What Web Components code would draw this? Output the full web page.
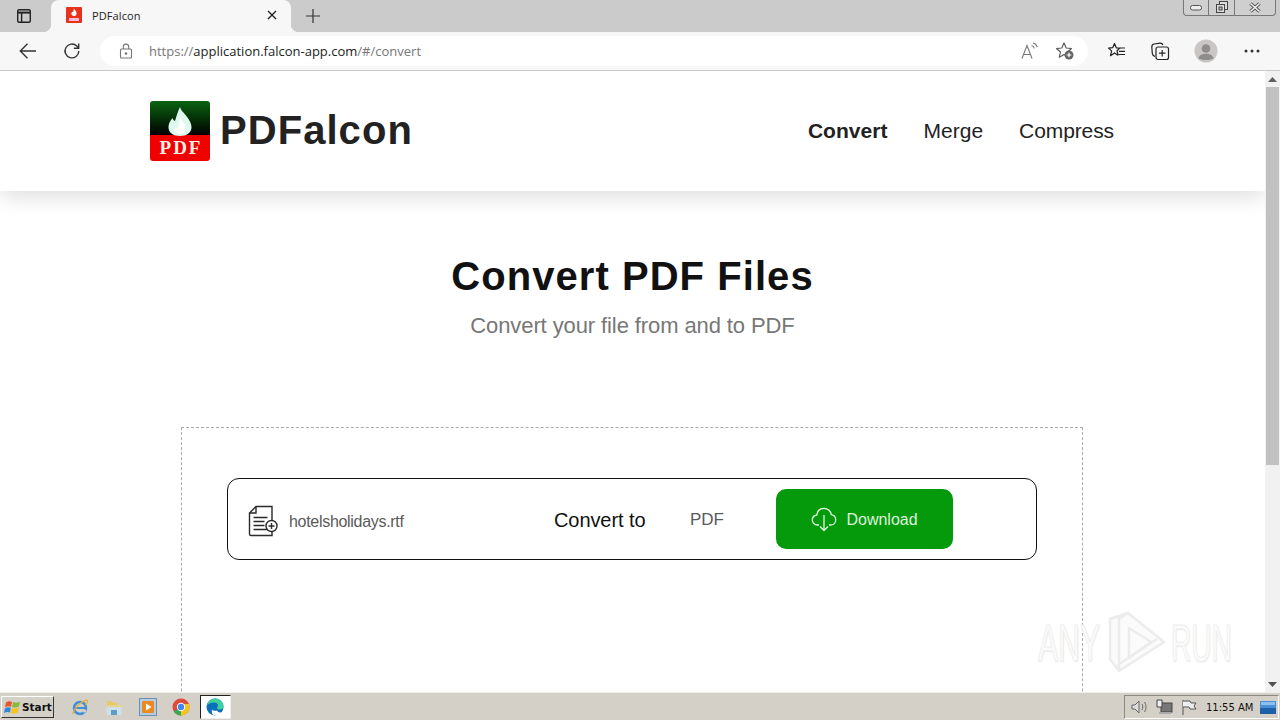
<!DOCTYPE html>
<html>
<head>
<meta charset="utf-8">
<title>PDFalcon</title>
<style>
html, body { margin: 0; height: 720px; overflow: hidden; background: #fff; }
body { display: flex; flex-direction: column; font-family: "Liberation Sans", Arial, sans-serif; }
</style>
</head>
<body>
<browser-bar></browser-bar>
<page-frame>
  <site-header></site-header>
  <hero-title></hero-title>
  <convert-box></convert-box>
</page-frame>
<win-taskbar></win-taskbar>

<script>
class BrowserBar extends HTMLElement {
    constructor() {
        super();
        this.attachShadow({ mode: 'open' });
        this.shadowRoot.innerHTML = `
        <style>
        :host { display: block; flex: none; height: 71px; font-family: "Open Sans", "Liberation Sans", sans-serif; }
        svg { display: block; }
        .strip { height: 32px; background: #cbcbcb; display: flex; position: relative; }
        .tabicon { width: 51px; display: flex; align-items: center; justify-content: center; padding-right: 3px; box-sizing: border-box; }
        .tab { width: 240px; height: 32px; background: #f7f7f7; border-radius: 8px 8px 0 0; display: flex; align-items: center; box-sizing: border-box; padding: 0 13px 2px 15px; font-size: 11px; color: #222; position: relative; }
        .tab::before, .tab::after { content: ''; position: absolute; bottom: 0; width: 8px; height: 8px; }
        .tab::before { left: -8px; background: radial-gradient(circle at 0 0, transparent 8px, #f7f7f7 8.5px); }
        .tab::after { right: -8px; background: radial-gradient(circle at 100% 0, transparent 8px, #f7f7f7 8.5px); }
        .tab span { flex: 1; margin-left: 10px; letter-spacing: .1px; }
        .plus { margin-left: 14px; display: flex; align-items: center; }
        .win { position: absolute; right: 4px; top: 0; width: 93px; height: 16px; border: 1px solid #777; border-top: 0; border-radius: 0 0 4px 4px; display: flex; box-sizing: border-box; background: #cfcfcf; }
        .win div { display: flex; align-items: center; justify-content: center; border-right: 1px solid #777; }
        .win div:last-child { border-right: 0; }
        .tools { height: 38px; background: #f7f7f7; display: flex; align-items: center; border-bottom: 1px solid #c9c9c9; }
        .nav { width: 100px; display: flex; flex: none; gap: 22px; padding-left: 17px; box-sizing: border-box; }
        .addr { width: 988px; height: 30px; background: #fff; border-radius: 15px; display: flex; align-items: center; box-sizing: border-box; padding: 0 13px 0 19px; font-size: 13px; color: #777; }
        .addr b { font-weight: 400; color: #222; }
        .url { flex: 1; margin-left: 16px; white-space: nowrap; }
        .right { display: flex; align-items: center; }
        .icons { display: flex; align-items: center; }
        </style>
        <div class="strip">
          <div class="tabicon">
            <svg width="16" height="16" viewBox="0 0 16 16" fill="none" stroke="#222" stroke-width="1.4"><rect x="1.7" y="1.7" width="12.6" height="12.6" rx="1.5"/><path d="M1.7 4.6h12.6" stroke-width="2"/><path d="M5.6 4.6v9.7"/></svg>
          </div>
          <div class="tab">
            <svg width="16" height="16" viewBox="0 0 16 16"><rect width="16" height="16" rx="1" fill="#e8321c"/><path d="M8 1.6c.4 1.5 2.6 2.6 2.6 4.8 0 1.5-1.1 2.6-2.6 2.6S5.4 7.9 5.4 6.5c0-1 .6-1.5.9-2.1.3.5.6.7.9.7C7.5 4.2 7.7 2.8 8 1.6z" fill="#fff"/><rect x="3" y="11" width="10" height="3" fill="#fbd"/></svg>
            <span>PDFalcon</span>
            <svg width="12" height="12" viewBox="0 0 12 12" stroke="#222" stroke-width="1.4"><path d="M2 2l8 8M10 2l-8 8"/></svg>
          </div>
          <div class="plus">
            <svg width="16" height="16" viewBox="0 0 16 16" stroke="#333" stroke-width="1.2"><path d="M8 1v14M1 8h14"/></svg>
          </div>
          <div class="win">
            <div style="width:24px"><svg width="12" height="6" viewBox="0 0 12 6"><rect x=".5" y=".5" width="11" height="4.5" rx="2" fill="#eee" stroke="#555"/></svg></div>
            <div style="width:25px"><svg width="14" height="13" viewBox="0 0 14 13" fill="#ddd" stroke="#444"><rect x="4.5" y=".5" width="8" height="8"/><rect x="1.5" y="3.5" width="8" height="8"/><rect x="4" y="6" width="3" height="3" fill="#bbb"/></svg></div>
            <div style="flex:1"><svg width="14" height="11" viewBox="0 0 14 11" stroke="#555" stroke-width="3.4"><path d="M2.5 1.5l9 8M11.5 1.5l-9 8"/><path d="M2.5 1.5l9 8M11.5 1.5l-9 8" stroke="#eee" stroke-width="1.6"/></svg></div>
          </div>
        </div>
        <div class="tools">
          <div class="nav">
            <svg width="22" height="22" viewBox="0 0 22 22" fill="none" stroke="#333" stroke-width="1.4"><path d="M19 11H3.5M10.5 3.8L3.3 11l7.2 7.2"/></svg>
            <svg width="22" height="22" viewBox="0 0 22 22" fill="none" stroke="#333" stroke-width="1.4"><path d="M17.8 11a6.9 6.9 0 1 1-2-4.9l1.7 1.8"/><path d="M17.7 3.4v4.800h-4.800"/></svg>
          </div>
          <div class="addr">
            <svg width="14" height="16" viewBox="0 0 14 16" fill="none" stroke="#777" stroke-width="1.1"><rect x="1.5" y="6" width="11" height="9" rx="1"/><path d="M4.3 6V3.8a2.7 2.7 0 0 1 5.4 0V6"/><circle cx="7" cy="10.5" r=".8" fill="#777"/></svg>
            <div class="url">https://<b>application.falcon-app.com</b>/#/convert</div>
            <div class="icons">
              <svg width="18" height="18" viewBox="0 0 18 18" fill="none" stroke="#777" stroke-width="1.1"><path d="M1 16.5L6 3.5l5 13M2.7 12.5h6.6"/><path d="M10.5 3.5c1.500.3 2.500 1.300 2.800 2.800M12 1c2.300.4 3.700 1.900 4.200 4"/></svg>
              <svg style="margin-left:16px" width="20" height="20" viewBox="0 0 20 20"><path d="M9 2l2.200 5 5.300.5-4 3.500 1.200 5.200L9 13.500l-4.700 2.700L5.500 11l-4-3.500L6.800 7z" fill="none" stroke="#555" stroke-width="1.1" stroke-linejoin="round"/><circle cx="14" cy="14" r="4.5" fill="#666"/><path d="M14 11.7v4.600M11.700 14h4.600" stroke="#fff" stroke-width="1.2"/></svg>
            </div>
          </div>
          <div class="right">
            <svg style="margin-left:19px" width="20" height="20" viewBox="0 0 20 20" fill="none" stroke="#222" stroke-width="1.2"><path d="M7.5 2.5l1.800 4.300 3.500.3-2.800 2.600 1 4.500-3.500-2.300-4 2.800 1.100-4.800L1.500 7.100l4.200-.4z" stroke-linejoin="round"/><path d="M13 7h5M12 10.300h6M11.500 13.500h6.500"/></svg>
            <svg style="margin-left:23px" width="20" height="20" viewBox="0 0 20 20" fill="none" stroke="#222" stroke-width="1.2"><path d="M5 15.500c-1.500-.6-2.500-1.600-2.700-3.100L1.800 6c0-1.500.8-2.800 2.300-3l6-.9c1.400-.1 2.300.5 2.800 1.900"/><rect x="6" y="6" width="12.5" height="12.5" rx="2"/><path d="M12.2 9v6.500M9 12.200h6.500"/></svg>
            <svg style="margin-left:24px" width="24" height="24" viewBox="0 0 24 24"><circle cx="12" cy="12" r="11.5" fill="#c9c6c4"/><circle cx="12" cy="9.5" r="4.3" fill="#8f8d8b"/><path d="M4.5 19c1-3.200 4-4.300 7.500-4.300s6.500 1.100 7.500 4.300c-2 2.800-13 2.800-15 0z" fill="#8f8d8b"/></svg>
            <svg style="margin-left:26px" width="16" height="4" viewBox="0 0 16 4" fill="#333"><circle cx="2" cy="2" r="1.5"/><circle cx="8" cy="2" r="1.5"/><circle cx="14" cy="2" r="1.5"/></svg>
          </div>
        </div>`;
    }
}

class PageFrame extends HTMLElement {
    constructor() {
        super();
        this.attachShadow({ mode: 'open' });
        this.shadowRoot.innerHTML = `
        <style>
        :host { display: flex; flex: none; height: 621px; position: relative; overflow: hidden; background: #fff; }
        .content { width: 1265px; flex: none; height: 621px; overflow: hidden; display: flex; flex-direction: column; }
        .bar { width: 15px; flex: none; background: #f1f1f1; display: flex; flex-direction: column; align-items: center; }
        .arrow { height: 16px; display: flex; align-items: center; justify-content: center; }
        .thumb { width: 13px; height: 378px; background: #c1c1c1; }
        .space { flex: 1; }
        .mark { position: absolute; left: 1038px; top: 537px; width: 200px; height: 70px; font: 400 52px/70px "Liberation Sans", sans-serif; color: #fbfbfb; -webkit-text-stroke: 1px #eeeeee; text-shadow: 1px 1px 2px #e6e6e6; pointer-events: none; }
        .mark span { position: absolute; top: 0; transform-origin: left center; white-space: nowrap; }
        .mark .any { left: 0; transform: scaleX(.58); }
        .mark .run { left: 133px; transform: scaleX(.54); }
        .mark svg { position: absolute; left: 69px; top: 2px; }
        </style>
        <div class="content"><slot></slot></div>
        <div class="bar">
          <div class="arrow"><svg width="9" height="5" viewBox="0 0 9 5"><path d="M4.5 0L9 5H0z" fill="#606060"/></svg></div>
          <div class="thumb"></div>
          <div class="space"></div>
          <div class="arrow"><svg width="9" height="5" viewBox="0 0 9 5"><path d="M0 0h9L4.5 5z" fill="#505050"/></svg></div>
        </div>
        <div class="mark">
          <span class="any">ANY</span>
          <svg width="60" height="64" viewBox="0 0 60 64" fill="none" stroke="#ececec" stroke-width="2.5" stroke-linejoin="round"><path d="M3 9v40l9 12 45-29L21 3z" fill="#fbfbfb"/><path d="M3 9l9-3v55"/><path d="M21 3l-9 6M22 48V18l22 14z"/><path d="M12 54l38-25"/></svg>
          <span class="run">RUN</span>
        </div>`;
    }
}

class SiteHeader extends HTMLElement {
    constructor() {
        super();
        this.attachShadow({ mode: 'open' });
        this.shadowRoot.innerHTML = `
        <style>
        :host { display: flex; flex: none; height: 120px; box-sizing: border-box; padding: 0 151px 0 150px; align-items: center; justify-content: space-between; box-shadow: 0 6px 20px rgba(0,0,0,.13); position: relative; background: #fff; }
        .brand { display: flex; align-items: center; gap: 10px; }
        .name { font-size: 40px; font-weight: 700; color: #222; letter-spacing: 1.05px; margin-top: -1px; }
        nav { display: flex; gap: 36px; font-size: 21px; color: #222; }
        nav .on { font-weight: 700; letter-spacing: .05px; }
        nav .last { letter-spacing: -.1px; }
        svg { display: block; }
        </style>
        <div class="brand">
          <svg width="60" height="60" viewBox="0 0 60 60">
            <defs><linearGradient id="g" x1="0" y1="0" x2="0" y2="1"><stop offset="0" stop-color="#0a6410"/><stop offset="1" stop-color="#000"/></linearGradient></defs>
            <path d="M3 0h54a3 3 0 0 1 3 3v31H0V3a3 3 0 0 1 3-3z" fill="url(#g)"/>
            <path d="M0 34h60v23a3 3 0 0 1-3 3H3a3 3 0 0 1-3-3z" fill="#f00000"/>
            <path d="M30 6c1 4 4.500 6 7.500 10.500 2.500 3.500 4 6.500 4 10C41.500 31.500 36.500 35 30 35s-11.500-3.500-11.500-8.500c0-4 1.500-6.500 4-9.500.5 1.500 1.200 2.500 2.500 3C26.500 15 28 10 30 6z" fill="#dff8ee"/>
            <path d="M30 16c.5 3 5.500 5.500 5.500 11 0 3.500-2.500 6-5.500 6s-5.500-2.500-5.500-6c1 .5 2.500.5 3.500-1 1-2 1.500-6 2-10z" fill="#fff"/>
            <text x="31" y="53" text-anchor="middle" font-family="Liberation Serif, serif" font-weight="700" font-size="19" letter-spacing="2" fill="#fff2ea">PDF</text>
          </svg>
          <div class="name">PDFalcon</div>
        </div>
        <nav><span class="on">Convert</span><span>Merge</span><span class="last">Compress</span></nav>`;
    }
}

class HeroTitle extends HTMLElement {
    constructor() {
        super();
        this.attachShadow({ mode: 'open' });
        this.shadowRoot.innerHTML = `
        <style>
        :host { display: block; flex: none; padding-top: 60px; text-align: center; }
        h1 { margin: 0; font-size: 40px; line-height: 50px; font-weight: 700; color: #111; letter-spacing: 1.05px; }
        p { margin: 12px 0 0; font-size: 22px; line-height: 26px; color: #777; letter-spacing: -.1px; }
        </style>
        <h1>Convert PDF Files</h1>
        <p>Convert your file from and to PDF</p>`;
    }
}

class ConvertBox extends HTMLElement {
    constructor() {
        super();
        this.attachShadow({ mode: 'open' });
        this.shadowRoot.innerHTML = `
        <style>
        :host { display: block; flex: none; width: 902px; height: 400px; margin: 88px 0 0 181px; box-sizing: border-box; border: 1px dashed #aaa; padding: 50px 45px 0; }
        .row { height: 82px; box-sizing: border-box; border: 1px solid #111; border-radius: 12px; display: flex; align-items: center; padding: 0 0 0 20px; }
        svg { display: block; flex: none; }
        .file { width: 306px; flex: none; display: flex; align-items: center; gap: 11px; font-size: 16px; color: #5a5a5a; letter-spacing: -.3px; padding-top: 4px; }
        .file span { margin-top: 2px; }
        .to { width: 136px; flex: none; font-size: 20px; color: #111; padding-top: 2px; letter-spacing: -.08px; }
        .fmt { width: 86px; flex: none; font-size: 17px; color: #5a5a5a; padding-top: 2px; letter-spacing: -.1px; }
        .btn { width: 177px; height: 60px; flex: none; background: #049a0b; border-radius: 10px; display: flex; align-items: center; justify-content: center; gap: 9px; color: #dff3df; font-size: 16px; }
        .btn span { padding-top: 1px; }
        </style>
        <div class="row">
          <div class="file">
            <svg width="30" height="32" viewBox="0 0 30 32" fill="none" stroke="#2a2a2a" stroke-width="1.4"><path d="M24 15V1.5H8L1.5 8V29q0 1.5 1.5 1.5h21V27"/><path d="M8 1.5V8H1.5"/><path d="M5.5 12.5h14M5.5 16.5h11M5.5 20.5h11M5.5 24.5h14"/><circle cx="23.5" cy="21" r="5.5"/><path d="M23.5 18v6M20.5 21h6"/></svg>
            <span>hotelsholidays.rtf</span>
          </div>
          <div class="to">Convert to</div>
          <div class="fmt">PDF</div>
          <div class="btn">
            <svg width="26" height="25" viewBox="0 0 26 25" fill="none" stroke="#e4f6e4" stroke-width="1.3"><path d="M8 18H6.500C3.500 18 1.300 15.700 1.300 13c0-2.600 2-4.600 4.500-5C6.400 4 9.300 1.300 13 1.300c3.600 0 6.700 2.700 7.300 6.400 2.500.4 4.400 2.600 4.400 5.200 0 2.800-2.200 5.100-5.200 5.100H18"/><path d="M13 8v15.500M9 19.500l4 4 4-4"/></svg>
            <span>Download</span>
          </div>
        </div>`;
    }
}

class WinTaskbar extends HTMLElement {
    constructor() {
        super();
        this.attachShadow({ mode: 'open' });
        this.shadowRoot.innerHTML = `
        <style>
        :host { display: flex; flex: none; height: 29px; box-sizing: border-box; background: #d4d0c8; border-top: 1px solid #f2f0ea; align-items: center; font-family: "Liberation Sans", sans-serif; position: relative; }
        svg { display: block; flex: none; }
        .start { width: 53px; height: 22px; margin-left: 1px; box-sizing: border-box; display: flex; align-items: center; gap: 1px; padding-left: 2px; border: 1px solid; border-color: #fff #333 #333 #fff; font: 700 10.5px "DejaVu Sans", sans-serif; color: #111; background: #d4d0c8; }
        .apps { display: flex; align-items: center; margin-left: 17px; gap: 15.75px; }
        .edge { width: 31px; height: 24px; margin: 0 -6.5px; background: #fff; border: 1px solid; border-color: #222 #eee #eee #222; box-sizing: border-box; display: flex; align-items: center; justify-content: center; }
        .space { flex: 1; }
        .tray { width: 155px; height: 24px; margin-right: 1px; box-sizing: border-box; border: 1px solid; border-color: #8a8a85 #fff #fff #8a8a85; display: flex; align-items: center; padding-left: 6px; color: #111; }
        .time { margin-left: 9px; white-space: nowrap; font-family: "DejaVu Sans", sans-serif; font-size: 10px; }
        </style>
        <div class="start">
          <svg width="17" height="16" viewBox="0 0 17 16"><path d="M2 3.5C4 2 6 2 8 3L7 7.800C5 7 3 7 1 8.300z" fill="#e8552a"/><path d="M9 3c2.500 1 4.500 1 7-.5l-1 5c-2.500 1.300-4.500 1.300-7 .4z" fill="#86b93c"/><path d="M1 9.300C3 8 5 8 6.800 8.800L6 13.500c-2-.8-3.800-.8-6 .5z" fill="#2f86dc"/><path d="M7.800 9c2.500 1 4.700.9 7-.4l-1 5c-2.300 1.300-4.500 1.300-7 .3z" fill="#f4c31c"/></svg>
          <span>Start</span>
        </div>
        <div class="apps">
          <svg width="18" height="18" viewBox="0 0 18 18" fill="none"><circle cx="9" cy="10" r="6" stroke="#3f8fd8" stroke-width="2.5"/><path d="M3.5 10h11" stroke="#3f8fd8" stroke-width="2"/><path d="M15 12.5l-3 1" stroke="#d4d0c8" stroke-width="2.5"/><path d="M1.5 16C3 11 10 3 16 2c1.500 1-.5 4-1.500 5" stroke="#e3b23c" stroke-width="1.3"/></svg>
          <svg width="18" height="18" viewBox="0 0 18 18"><path d="M2 3h5l1.500 2H13v2H2z" fill="#e9c86a"/><path d="M1 7h16l-1 10H2z" fill="#cfe0ea"/><path d="M1 7h16v2H1z" fill="#e8d48c"/><path d="M6 17v-5h6v5z" fill="#5a9ec9"/></svg>
          <svg width="18" height="18" viewBox="0 0 18 18"><rect x=".5" y=".5" width="17" height="17" fill="#b5cde2" stroke="#6f8fb0"/><rect x="3" y="3" width="12" height="12" rx="1.5" fill="#ea8a20"/><path d="M7 5.500l5.500 3.500L7 12.500z" fill="#fff"/></svg>
          <svg width="18" height="18" viewBox="0 0 18 18"><circle cx="9" cy="9" r="8.5" fill="#dd4b39"/><path d="M9 9L1.800 13.500A8.500 8.500 0 0 0 9 17.500z" fill="#3aa757"/><path d="M9 17.500A8.500 8.500 0 0 0 17 6H9z" fill="#f5c518"/><circle cx="9" cy="9" r="4.2" fill="#fff"/><circle cx="9" cy="9" r="3.2" fill="#4285f4"/></svg>
          <div class="edge">
            <svg width="18" height="18" viewBox="0 0 18 18"><circle cx="9" cy="9" r="8.5" fill="#0c70b8"/><path d="M1 8C2 3 5.500.5 9 .5c5 0 8.500 3.500 8.500 8 0 2-1.700 3-3.500 3-2 0-3-.7-3-1.500 0-1.500 1-1 1-2.500C12 5.500 10 4.500 8 4.500 4.500 4.500 2 6 1 8z" fill="#3fd0a0"/><path d="M11 12.500c1 2 3 2.500 5 1.500-1.500 2.500-4 3.500-6.500 3.500-3.500 0-4-3-3.500-6 1 1.500 3 1.500 5 1z" fill="#fff"/></svg>
          </div>
        </div>
        <div class="space"></div>
        <div class="tray">
          <svg width="18" height="16" viewBox="0 0 18 16" fill="none" stroke="#666"><path d="M1 6h3l4-4v12l-4-4H1z" fill="#ddd"/><path d="M11 5c1 2 1 4 0 6M13.500 3c2 3 2 7 0 10"/></svg>
          <svg style="margin-left:7px" width="17" height="16" viewBox="0 0 17 16"><rect x="5" y="4" width="11" height="9" fill="#777" stroke="#444"/><path d="M1 1h5v7H1z" fill="#eee" stroke="#444"/><path d="M3 13h12v2H3z" fill="#aaa"/></svg>
          <svg style="margin-left:8px" width="16" height="16" viewBox="0 0 16 16" fill="none" stroke="#555"><path d="M2 1v15"/><path d="M2 2h7l1 2h5l-2 3 2 3H9L8 8H2" fill="#eee"/></svg>
          <span class="time">11:55 AM</span>
          <svg style="margin-left:7px" width="16" height="13" viewBox="0 0 16 13"><rect width="16" height="13" fill="#4a8fd6"/><rect y="7" width="16" height="6" fill="#1d5fa8"/><rect x="1" y="1" width="14" height="3" fill="#8cc0ee"/></svg>
        </div>`;
    }
}

customElements.define('browser-bar', BrowserBar);
customElements.define('page-frame', PageFrame);
customElements.define('site-header', SiteHeader);
customElements.define('hero-title', HeroTitle);
customElements.define('convert-box', ConvertBox);
customElements.define('win-taskbar', WinTaskbar);
</script>
</body>
</html>
